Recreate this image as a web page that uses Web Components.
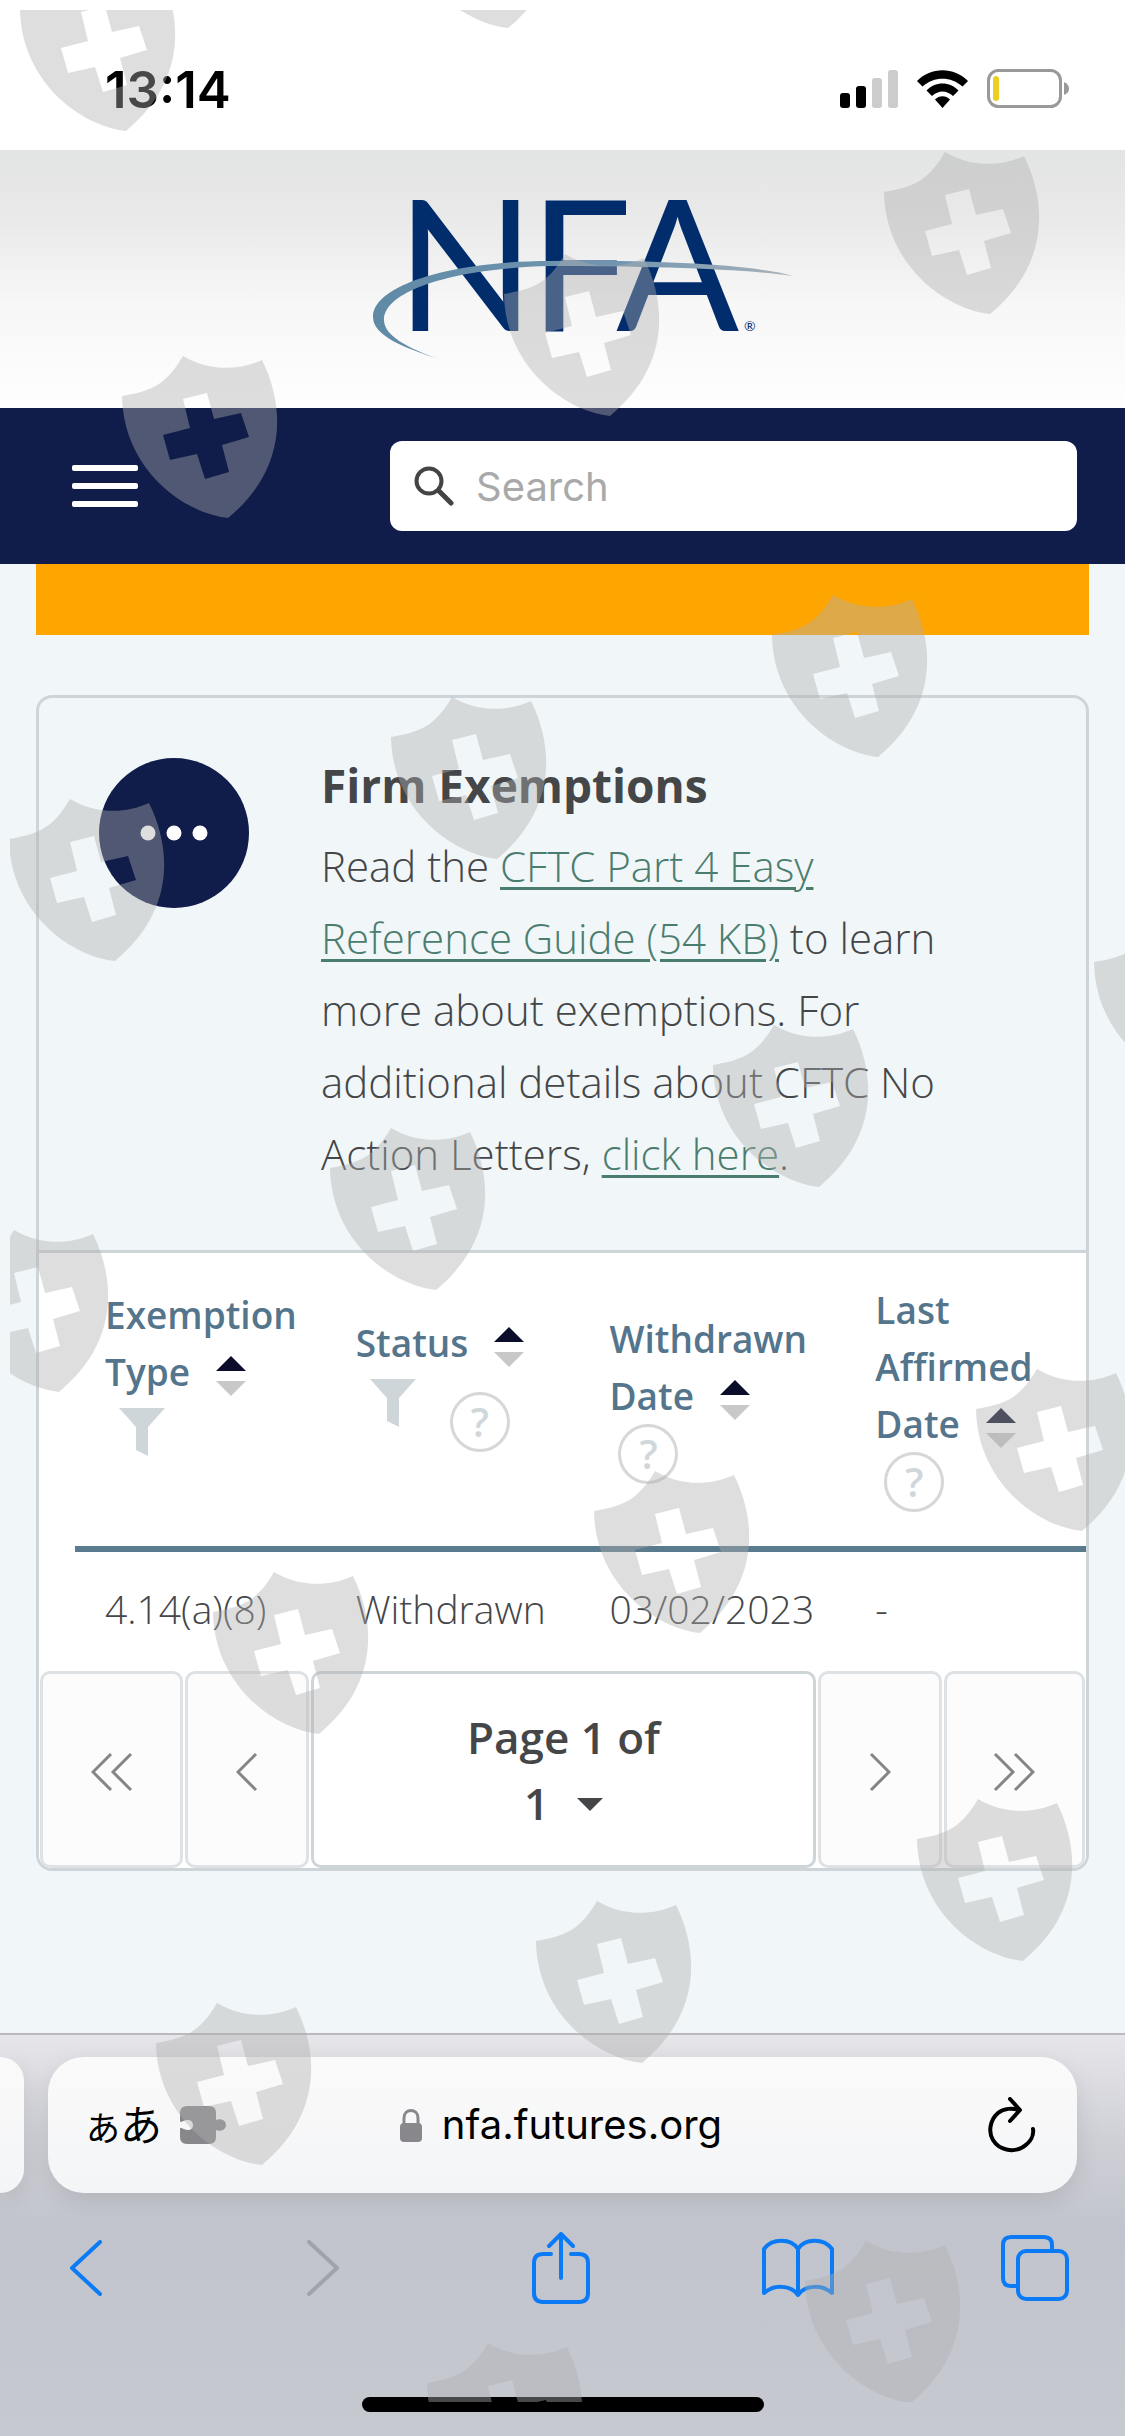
<!DOCTYPE html>
<html lang="en">
<head>
<meta charset="utf-8">
<meta name="viewport" content="width=device-width">
<title>NFA - Firm Exemptions</title>
<style>
  html { background: #c4c6cf; }
  body {
    margin: 0;
    min-height: 100vh;
    display: flex;
    flex-direction: column;
    position: relative;
    font-family: "Open Sans", "Noto Sans", sans-serif;
    color: #444648;
    --navy: #101c49;
    --line: #ced5d9;
    --steel: #54758b;
    --ui-font: Inter, "Liberation Sans", sans-serif;
  }
  a { color: #4b7d6e; text-decoration-thickness: 3px; text-underline-offset: 5px; }
</style>
</head>
<body>
  <status-bar time="13:14"></status-bar>
  <site-header></site-header>
  <site-nav></site-nav>
  <page-body>
    <info-card>
      <span slot="title">Firm Exemptions</span>
      Read the <a href="#guide">CFTC Part 4 Easy Reference Guide (54 KB)</a> to learn more about
      exemptions. For additional details about CFTC No Action Letters, <a href="#letters">click here</a>.
      <exemption-table slot="table"></exemption-table>
      <page-switcher slot="table"></page-switcher>
    </info-card>
  </page-body>
  <browser-bar host="nfa.futures.org"></browser-bar>
  <shield-overlay></shield-overlay>

<script>
const ICONS = {
  signal: [58, 38, `<rect y="23" width="10" height="15" rx="3"/><rect x="16" y="16" width="10" height="22" rx="3"/>
    <g fill="#ccc"><rect x="32" y="8" width="10" height="30" rx="3"/><rect x="48" width="10" height="38" rx="3"/></g>`],
  wifi: [51, 38, `<path d="M0 11C14 -3.500 37 -3.500 51 11L45.500 16.500C34 6 17 6 5.500 16.500Z"/>
    <path d="M9.500 20.500C18 11 33 11 41.500 20.500L36 26C29.500 20 21.500 20 15 26Z"/><path d="M18 29.500C22 25 29 25 33 29.500L25.500 38Z"/>`],
  battery: [82, 40, `<rect x="1.500" y="1.500" width="72" height="36" rx="10" fill="none" stroke="#999" stroke-width="3"/>
    <rect x="6" y="7" width="6" height="25" rx="3" fill="#ebcf23"/><path d="M77 13Q82 15 82 19.500T77 26Z" fill="#999"/>`],
  search: [40, 40, `<g fill="none" stroke="#444" stroke-linecap="round"><circle cx="15" cy="15" r="12.500" stroke-width="4"/><path d="M25 25L37 37" stroke-width="5"/></g>`],
  menu: [66, 42, `<g fill="#fff"><rect width="66" height="6" rx="2"/><rect y="18" width="66" height="6" rx="2"/><rect y="36" width="66" height="6" rx="2"/></g>`],
  dots: [68, 16, `<g fill="#fff"><circle cx="8" cy="8" r="7.500"/><circle cx="34" cy="8" r="7.500"/><circle cx="60" cy="8" r="7.500"/></g>`],
  sort: [30, 40, `<path d="M0 15L15 0L30 15Z" fill="#0b0e2a"/><path d="M0 25H30L15 40Z" fill="#c8c8c8"/>`],
  funnel: [46, 48, `<path d="M0 0H46L29 19V48L17 42V19Z" fill="#ced6d9"/>`],
  caret: [26, 13, `<path d="M0 0H26L13 13Z" fill="#444648"/>`],
  first: [42, 40, `<path d="M20 2L2 20L20 38M40 2L22 20L40 38"/>`, 'line'],
  prev: [22, 40, `<path d="M20 2L2 20L20 38"/>`, 'line'],
  next: [22, 40, `<path d="M2 2L20 20L2 38"/>`, 'line'],
  last: [42, 40, `<path d="M2 2L20 20L2 38M22 2L40 20L22 38"/>`, 'line'],
  puzzle: [46, 38, `<path d="M7 0H29Q36 0 36 7V14C40 12 46 14 46 19S40 26 36 24V31Q36 38 29 38H7Q0 38 0 31V22.500C2 21 3 24 7.500 24C11 24 13 22 13 19S11 14 7.500 14C3 14 2 17 0 15.500V7Q0 0 7 0Z" fill="#88888c"/>`],
  lock: [22, 33, `<rect y="14" width="22" height="19" rx="4" fill="#88888c"/><path d="M4 15V9C4 -1 18 -1 18 9V15" fill="none" stroke="#88888c" stroke-width="3"/>`],
  reload: [48, 56, `<g fill="none" stroke="#000" stroke-width="4" stroke-linecap="round" stroke-linejoin="round"><path d="M30 13C25 11 16 11 10 16C2 23 0 35 5 43C11 53 25 56 35 50C43 45 46 38 45 32"/><path d="M22 2L32 13L22 24"/></g>`],
  back: [34, 56, `<path d="M31 2L3 28L31 54"/>`, 'tool'],
  forward: [34, 56, `<path d="M3 2L31 28L3 54"/>`, 'tool'],
  share: [58, 72, `<path d="M19 22H11Q2 22 2 31V61Q2 70 11 70H47Q56 70 56 61V31Q56 22 47 22H39M29 46V3M17 14L29 2L41 14"/>`, 'tool'],
  book: [72, 60, `<path d="M36 57V11C29 0 10 0 2 11V55C11 47 28 46 36 57C44 46 61 47 70 55V11C62 0 43 0 36 11"/>`, 'tool'],
  tabs: [68, 66, `<path d="M15 51H10Q2 51 2 43V10Q2 2 10 2H43Q51 2 51 10V15"/><rect x="17" y="16" width="49" height="48" rx="8"/>`, 'tool'],
};
const STROKES = {
  line: 'fill="none" stroke="currentColor" stroke-width="3"',
  tool: 'fill="none" stroke="currentColor" stroke-width="4" stroke-linecap="round" stroke-linejoin="round"',
};

// Base: renders the string returned by render() into an open shadow root
class BaseElement extends HTMLElement {
  connectedCallback() {
    if (this.shadowRoot) return;
    const template = document.createElement('template');
    template.innerHTML = `<style>:host{display:block;box-sizing:border-box}*{box-sizing:border-box}
      button{font:inherit;color:inherit;background:none;border:0;padding:0;margin:0;text-align:inherit}</style>` + this.render();
    this.attachShadow({ mode: 'open' }).appendChild(template.content.cloneNode(true));
  }
}

customElements.define('ui-icon', class extends BaseElement {
  render() {
    const [w, h, body, kind] = ICONS[this.getAttribute('name')];
    return `<style>:host{display:inline-block;flex:none;line-height:0;vertical-align:middle}</style>
      <svg width="${w}" height="${h}" viewBox="0 0 ${w} ${h}" aria-hidden="true" ${STROKES[kind] || ''}>${body}</svg>`;
  }
});

customElements.define('status-bar', class extends BaseElement {
  render() {
    return `<style>
      :host { background: #fff; height: 150px; padding: 28px 56px 0 105px; display: flex; align-items: center; justify-content: space-between; color: #000; }
      time { font: 600 51px var(--ui-font); }
      .icons { display: flex; align-items: center; gap: 19px; }
    </style>
    <time>${this.getAttribute('time')}</time>
    <div class="icons"><ui-icon name="signal"></ui-icon><ui-icon name="wifi"></ui-icon><ui-icon name="battery"></ui-icon></div>`;
  }
});

customElements.define('site-header', class extends BaseElement {
  render() {
    return `<style>
      :host { height: 258px; padding-left: 36px; background: linear-gradient(#e3e4e4, #e9e9ea 25%, #f7f7f8 60%, #fefefe); text-align: center; }
      a { display: inline-block; }
      svg { display: block; }
      text { font-family: Lato, sans-serif; fill: #022d6d; }
    </style>
    <a href="#home" aria-label="NFA home">
      <svg width="440" height="240" viewBox="0 -30 440 240">
        <defs><linearGradient id="g"><stop offset="0" stop-color="#5f8aa6"/><stop offset=".6" stop-color="#7396b0"/><stop offset="1" stop-color="#a9b3bb"/></linearGradient></defs>
        <text x="35 168 255" y="151" font-size="182">NFA</text>
        <text x="383" y="151" font-size="14">®</text>
        <path d="M81 180C40 167 12 155 12 137C12 105 90 81 190 81C290 80 390 84 432 96C385 89 290 86 190 86C95 88 23 110 23 140C23 155 45 168 81 180Z" fill="url(#g)"/>
      </svg>
    </a>`;
  }
});

customElements.define('site-nav', class extends BaseElement {
  render() {
    return `<style>
      :host { background: var(--navy); height: 156px; padding: 0 48px 0 72px; display: flex; align-items: center; justify-content: space-between; }
      label { width: 687px; max-width: 75%; height: 90px; background: #fff; border-radius: 12px; display: flex; align-items: center; gap: 22px; padding: 0 24px; }
      input { flex: 1; min-width: 0; border: 0; padding: 0; outline: 0; background: none; font: 400 40px var(--ui-font); color: #333; }
      input::placeholder { color: #a9a9a9; opacity: 1; }
    </style>
    <button type="button" aria-label="Menu"><ui-icon name="menu"></ui-icon></button>
    <label aria-label="Search"><ui-icon name="search"></ui-icon><input type="search" placeholder="Search"></label>`;
  }
});

customElements.define('page-body', class extends BaseElement {
  render() {
    return `<style>
      :host { flex: 1; background: #f1f6f9; padding: 0 36px; }
      .banner { height: 71px; margin-bottom: 60px; background: #ffa500; }
    </style>
    <div class="banner"></div>
    <slot></slot>`;
  }
});

customElements.define('info-card', class extends BaseElement {
  render() {
    return `<style>
      :host { border: 3px solid var(--line); border-radius: 16px; overflow: hidden; }
      .intro { display: flex; gap: 72px; padding: 60px 96px 60px 60px; border-bottom: 3px solid var(--line); }
      .badge { flex: none; width: 150px; height: 150px; border-radius: 50%; background: var(--navy); display: flex; align-items: center; justify-content: center; }
      h2 { margin: 0 0 18px; font-size: 46px; line-height: 54px; font-weight: 700; }
      p { margin: 0; font-size: 42px; line-height: 72px; font-weight: 300; }
    </style>
    <div class="intro">
      <div class="badge"><ui-icon name="dots"></ui-icon></div>
      <div><h2><slot name="title"></slot></h2><p><slot></slot></p></div>
    </div>
    <slot name="table"></slot>`;
  }
});

customElements.define('sort-header', class extends BaseElement {
  render() {
    const words = this.getAttribute('label').split(' ');
    const end = words.pop();
    return `<style>
      .sort { display: block; line-height: 57px; }
      .end { white-space: nowrap; }
      .end ui-icon { margin-left: 26px; }
      .tools { display: flex; align-items: flex-start; gap: 34px; padding-left: 9px; line-height: 0; }
      .tools.filter { height: 108px; padding: 8px 0 0 14px; }
      .filter .help { margin-top: 13px; }
      .help { width: 60px; height: 60px; border: 3px solid #d5d7d8; border-radius: 50%; color: #d0d7da; font-weight: 600; font-size: 40px; line-height: 52px; text-align: center; }
    </style>
    <button class="sort" type="button">${words.join(' ')} <span class="end">${end}<ui-icon name="sort"></ui-icon></span></button>
    <div class="tools ${this.hasAttribute('filter') ? 'filter' : ''}">
      ${this.hasAttribute('filter') ? '<button type="button" aria-label="Filter"><ui-icon name="funnel"></ui-icon></button>' : ''}
      ${this.hasAttribute('help') ? '<button type="button" class="help">?</button>' : ''}
    </div>`;
  }
});

customElements.define('exemption-table', class extends BaseElement {
  render() {
    const rows = [['4.14(a)(8)', 'Withdrawn', '03/02/2023', '-']];
    return `<style>
      :host { background: #fff; padding-left: 36px; }
      table { width: 100%; table-layout: fixed; border-spacing: 0; }
      th, td { text-align: left; vertical-align: middle; line-height: 57px; }
      th { padding: 28px 0 34px 30px; color: var(--steel); font-size: 37px; font-weight: 600; border-bottom: 6px solid #5a7a8d; }
      td { padding: 28px 0 34px 30px; font-size: 39px; font-weight: 300; }
    </style>
    <table>
      <colgroup><col style="width:24.8%"><col style="width:25.1%"><col style="width:26.3%"><col></colgroup>
      <thead><tr>
        <th><sort-header label="Exemption Type" filter></sort-header></th>
        <th><sort-header label="Status" filter help></sort-header></th>
        <th><sort-header label="Withdrawn Date" help></sort-header></th>
        <th><sort-header label="Last Affirmed Date" help></sort-header></th>
      </tr></thead>
      <tbody>${rows.map(r => `<tr>${r.map(c => `<td>${c}</td>`).join('')}</tr>`).join('')}</tbody>
    </table>`;
  }
});

customElements.define('page-switcher', class extends BaseElement {
  render() {
    const nav = (name, label) => `<button type="button" aria-label="${label}"><ui-icon name="${name}"></ui-icon></button>`;
    return `<style>
      :host { background: #fff; display: grid; grid-template-columns: 143fr 123fr 505fr 123fr 141fr; gap: 2px; padding: 0 1px; }
      button, .current { display: flex; align-items: center; justify-content: center; border: 3px solid #dfe2e4; border-radius: 10px; }
      button { background: #fcfcfd; color: #858585; padding-top: 4px; }
      .current { height: 197px; flex-direction: column; border-color: var(--line); font-size: 44px; font-weight: 600; line-height: 66px; }
      .row { display: flex; align-items: center; gap: 27px; }
      select { appearance: none; border: 0; padding: 0; background: none; font: inherit; color: inherit; line-height: 66px; }
    </style>
    ${nav('first', 'First page')}
    ${nav('prev', 'Previous page')}
    <div class="current"><label for="page">Page 1 of</label>
      <div class="row"><select id="page"><option>1</option></select><ui-icon name="caret"></ui-icon></div></div>
    ${nav('next', 'Next page')}
    ${nav('last', 'Last page')}`;
  }
});

customElements.define('browser-bar', class extends BaseElement {
  render() {
    const tool = (name, label) => `<button type="button" aria-label="${label}" class="${name}"><ui-icon name="${name}"></ui-icon></button>`;
    return `<style>
      :host { border-top: 2px solid #b9b9be; background: linear-gradient(#e6e6ea, #d0d1d7 25%, #c2c4cd 48%, #c7c9d1); font-family: var(--ui-font); color: #000; padding-bottom: 24px; }
      .address { display: flex; gap: 24px; padding: 22px 48px 0 0; }
      .peek, .pill { height: 136px; background: linear-gradient(#fafafa, #f4f5f7); box-shadow: 0 8px 24px rgba(0, 0, 0, .1); }
      .peek { width: 24px; border-radius: 0 36px 36px 0; }
      .pill { flex: 1; border-radius: 36px; padding: 0 41px 0 38px; display: grid; grid-template-columns: 1fr auto 1fr; align-items: center; }
      .left { display: flex; align-items: center; gap: 18px; }
      .lang { font-family: "Noto Sans CJK JP", sans-serif; font-size: 42px; line-height: 60px; }
      .lang small { font-size: 34px; }
      .url { display: flex; align-items: center; gap: 20px; font-size: 40px; line-height: 60px; }
      .reload { justify-self: end; }
      .tools { display: flex; align-items: center; justify-content: space-between; height: 150px; padding: 0 56px 0 52px; color: #0b7bf5; }
      .tools button { width: 68px; display: flex; justify-content: center; }
      .forward { color: #a0a3aa; }
      .home { width: 402px; height: 15px; margin: 54px auto 0; border-radius: 8px; background: #000; }
    </style>
    <div class="address">
      <div class="peek"></div>
      <div class="pill">
        <div class="left"><button type="button" class="lang"><small>あ</small>あ</button><ui-icon name="puzzle"></ui-icon></div>
        <button type="button" class="url"><ui-icon name="lock"></ui-icon>${this.getAttribute('host')}</button>
        ${tool('reload', 'Reload')}
      </div>
    </div>
    <nav class="tools">${tool('back', 'Back')}<button type="button" aria-label="Forward" style="color:#a0a3aa"><ui-icon name="forward"></ui-icon></button>${tool('share', 'Share')}${tool('book', 'Bookmarks')}${tool('tabs', 'Tabs')}</nav>
    <div class="home"></div>`;
  }
});

// Translucent shields scattered over the page, each placed by its bottom tip
customElements.define('shield-overlay', class extends BaseElement {
  render() {
    const tips = [[126, 131], [508, 28], [990, 314], [610, 416], [228, 518], [878, 757], [497, 859], [115, 961],
      [1200, 1084], [819, 1187], [436, 1290], [59, 1392], [1082, 1531], [700, 1633], [319, 1734],
      [1023, 1961], [642, 2063], [262, 2165], [911, 2403], [533, 2505]];
    return `<style>
      :host { position: absolute; inset: 0; overflow: hidden; pointer-events: none; }
      svg { display: block; }
    </style>
    <svg width="1125" height="2436" viewBox="0 0 1125 2436" aria-hidden="true">
      <defs>
        <path id="shield" fill-rule="evenodd" d="M0 0C-46 -5 -105 -50 -106 -122C-76 -127 -62 -133 -45 -162C-20 -147 10 -147 34 -158C60 -105 55 -45 0 0Z
          M-45 -119L-21 -125L-14 -99L13 -105L21 -81L-6 -73L1 -46L-23 -39L-31 -64L-58 -58L-65 -83L-38 -90Z"/>
        <clipPath id="area"><rect x="10" y="10" width="1115" height="2392"/></clipPath>
      </defs>
      <g clip-path="url(#area)" fill="#b0b0b0" fill-opacity=".41">
        ${tips.map(([x, y]) => `<use href="#shield" x="${x}" y="${y}"/>`).join('')}
      </g>
    </svg>`;
  }
});
</script>
</body>
</html>
